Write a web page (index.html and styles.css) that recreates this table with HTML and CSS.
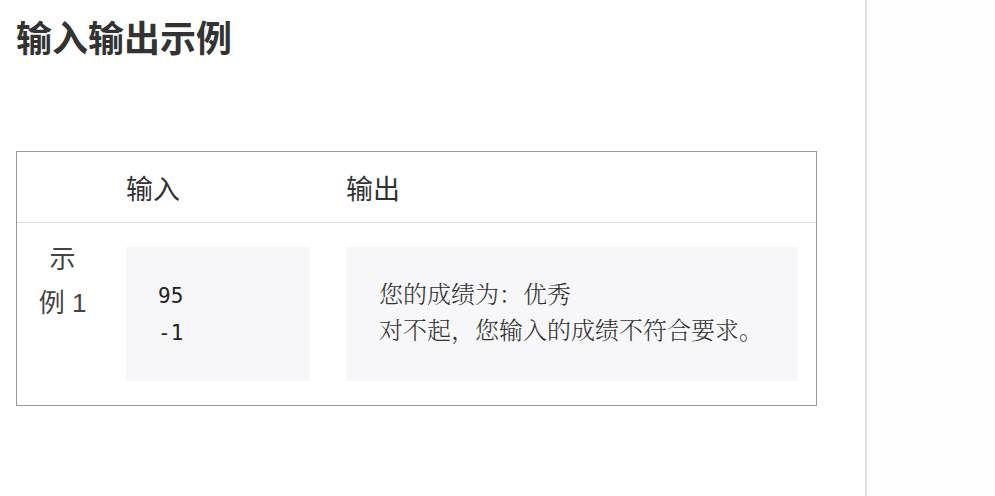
FILE: index.html
```html
<!DOCTYPE html>
<html>
  <head>
  <meta charset="utf-8">
  <link rel="stylesheet" href="styles.css">
  </head>
  <body>
    <div class="page">
      <div class="main">
        <h2 class="title">输入输出示例</h2>
        <table class="samples">
          <thead>
            <tr>
              <th class="col-no"></th>
              <th class="col-in">输入</th>
              <th class="col-out">输出</th>
            </tr>
          </thead>
          <tbody>
            <tr>
              <td class="col-no">示<br>例 1</td>
              <td class="col-in"><pre class="code">95
-1</pre></td>
              <td class="col-out"><pre class="result">您的成绩为：优秀
对不起，您输入的成绩不符合要求。</pre></td>
            </tr>
          </tbody>
        </table>
      </div>
      <div class="side"></div>
    </div>
  </body>
</html>
```

FILE: styles.css
```css
    html, body {
      margin: 0;
      padding: 0;
      background: #fff;
    }
    body {
      font-family: "Noto Sans CJK SC", "Noto Sans", sans-serif;
      color: #333;
    }
    .page {
      display: flex;
      height: 496px;
      overflow: hidden;
    }
    .main {
      width: 849px;
      padding-left: 16px;
      border-right: 2px solid #dedede;
    }
    .side {
      flex: 1;
      background: #fefefe;
    }
    .title {
      margin: 11px 0 0;
      font-size: 36px;
      line-height: 50px;
      font-weight: bold;
      color: #333;
    }
    .samples {
      margin-top: 90px;
      width: 801px;
      table-layout: fixed;
      border-collapse: separate;
      border-spacing: 0;
      border: 1px solid #999;
    }
    .samples th {
      height: 70px;
      padding: 0 18px;
      font-size: 27px;
      font-weight: normal;
      text-align: left;
      color: #333;
      border-bottom: 1px solid #ddd;
    }
    .samples td {
      padding: 24px 18px 24px;
      vertical-align: top;
    }
    .col-no {
      width: 55px;
    }
    .col-in {
      width: 184px;
    }
    td.col-no {
      font-family: "Liberation Sans", "Noto Sans CJK SC", sans-serif;
      font-size: 26px;
      line-height: 44px;
      text-align: center;
      color: #444;
      padding-top: 14px;
    }
    pre {
      margin: 0;
      height: 134px;
      box-sizing: border-box;
      padding: 31px 32px;
      background: #f7f7f9;
      line-height: 37px;
      white-space: pre;
    }
    .code {
      font-family: "DejaVu Sans Mono", monospace;
      font-size: 21px;
      color: #222;
    }
    .result {
      padding-top: 28px;
      padding-left: 33px;
      font-family: "Noto Serif CJK SC", "Noto Sans CJK SC", serif;
      font-weight: 300;
      font-size: 24px;
      line-height: 36px;
      color: #333;
    }
```
